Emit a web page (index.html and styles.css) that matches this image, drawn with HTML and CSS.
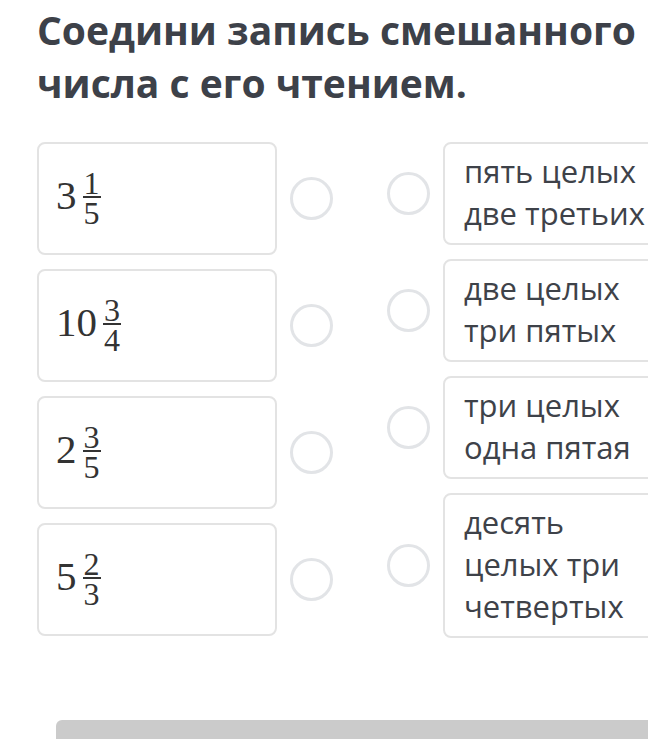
FILE: index.html
```html
<!DOCTYPE html>
<html lang="ru">
<head>
<meta charset="utf-8">
<title>Соедини запись смешанного числа с его чтением.</title>
<link rel="stylesheet" href="styles.css">
</head>
<body>
<main class="page">
  <h1 class="title">Соедини запись смешанного числа с его чтением.</h1>
  <section class="match">
    <div class="col col-left">
      <div class="row row-left">
        <div class="card card-math">
          <span class="whole">3</span>
          <span class="frac"><span class="num">1</span><span class="bar"></span><span class="den">5</span></span>
        </div>
        <span class="radio"></span>
      </div>
      <div class="row row-left">
        <div class="card card-math">
          <span class="whole">10</span>
          <span class="frac"><span class="num">3</span><span class="bar"></span><span class="den">4</span></span>
        </div>
        <span class="radio"></span>
      </div>
      <div class="row row-left">
        <div class="card card-math">
          <span class="whole">2</span>
          <span class="frac"><span class="num">3</span><span class="bar"></span><span class="den">5</span></span>
        </div>
        <span class="radio"></span>
      </div>
      <div class="row row-left">
        <div class="card card-math">
          <span class="whole">5</span>
          <span class="frac"><span class="num">2</span><span class="bar"></span><span class="den">3</span></span>
        </div>
        <span class="radio"></span>
      </div>
    </div>
    <div class="col col-right">
      <div class="row row-right">
        <span class="radio"></span>
        <div class="card card-text">пять целых<br>две третьих</div>
      </div>
      <div class="row row-right">
        <span class="radio"></span>
        <div class="card card-text">две целых<br>три пятых</div>
      </div>
      <div class="row row-right">
        <span class="radio"></span>
        <div class="card card-text">три целых<br>одна пятая</div>
      </div>
      <div class="row row-right">
        <span class="radio"></span>
        <div class="card card-text">десять<br>целых три<br>четвертых</div>
      </div>
    </div>
  </section>
  <div class="footer-bar"></div>
</main>
</body>
</html>
```

FILE: styles.css
```css
html, body {
  margin: 0;
  padding: 0;
  background: #ffffff;
  overflow: hidden;
}

.page {
  width: 648px;
  height: 739px;
  overflow: hidden;
  padding: 3px 0 0 37px;
  box-sizing: border-box;
}

.title {
  margin: 0;
  font-family: "Open Sans", sans-serif;
  font-weight: 700;
  font-size: 39px;
  line-height: 53px;
  color: #3d4149;
  width: 611px;
}

.match {
  margin-top: 33px;
  display: flex;
  gap: 54px;
  align-items: flex-start;
}

.col {
  display: flex;
  flex-direction: column;
  gap: 14px;
}

.row {
  display: flex;
  align-items: center;
  gap: 13px;
}

.card {
  box-sizing: border-box;
  border: 2px solid #e3e3e3;
  border-radius: 8px;
  background: #fff;
}

.card-math {
  width: 240px;
  height: 113px;
  display: flex;
  align-items: center;
  padding-left: 17px;
  color: #333333;
  font-family: "Liberation Serif", "Times New Roman", serif;
}

.whole {
  font-size: 41px;
  line-height: 44px;
  margin-bottom: 7px;
}

.frac {
  display: inline-flex;
  flex-direction: column;
  align-items: stretch;
  margin-left: 6px;
  font-size: 32px;
  text-align: center;
}

.num {
  line-height: 23px;
  padding: 0 1px;
}

.den {
  line-height: 24px;
  padding: 0 1px;
}

.bar {
  display: block;
  height: 2px;
  background: #333333;
  margin: 1px 0 3px;
}

.radio {
  flex: none;
  width: 43px;
  height: 43px;
  box-sizing: border-box;
  border: 3px solid #e2e4e7;
  border-radius: 50%;
}

.card-text {
  width: 240px;
  padding: 6px 19px 9px;
  font-family: "Open Sans", sans-serif;
  font-size: 31px;
  line-height: 42px;
  color: #3e4249;
  white-space: nowrap;
}

.footer-bar {
  margin-top: 82px;
  margin-left: 19px;
  height: 40px;
  background: #cbcbcb;
  border-radius: 6px 0 0 0;
}
```
